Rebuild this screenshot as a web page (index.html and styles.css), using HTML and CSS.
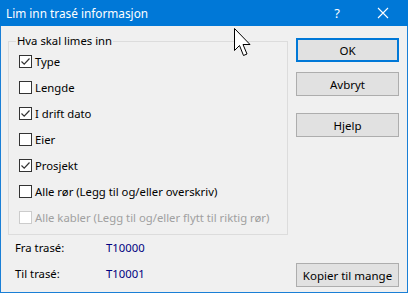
FILE: index.html
```html
<!DOCTYPE html>
<html>
<head>
<meta charset="utf-8">
<link rel="stylesheet" href="styles.css">
</head>
<body>
<div class="window">
  <div class="titlebar">
    <span class="title">Lim inn trasé informasjon</span>
    <span class="help">?</span>
    <span class="close">
      <svg width="12" height="12" viewBox="0 0 12 12"><path d="M1 1 L11 11 M11 1 L1 11" stroke="#fff" stroke-width="1.1" fill="none"/></svg>
    </span>
  </div>
  <div class="content">
    <div class="left">
      <fieldset class="group">
        <legend>Hva skal limes inn</legend>
        <div class="row first"><span class="cb checked"><svg width="11" height="11" viewBox="0 0 11 11"><path d="M1.5 5.5 L4.2 8.2 L9.5 2.5" stroke="#333" stroke-width="1.2" fill="none"/></svg></span><span>Type</span></div>
        <div class="row"><span class="cb"></span><span>Lengde</span></div>
        <div class="row"><span class="cb checked"><svg width="11" height="11" viewBox="0 0 11 11"><path d="M1.5 5.5 L4.2 8.2 L9.5 2.5" stroke="#333" stroke-width="1.2" fill="none"/></svg></span><span>I drift dato</span></div>
        <div class="row"><span class="cb"></span><span>Eier</span></div>
        <div class="row"><span class="cb checked"><svg width="11" height="11" viewBox="0 0 11 11"><path d="M1.5 5.5 L4.2 8.2 L9.5 2.5" stroke="#333" stroke-width="1.2" fill="none"/></svg></span><span>Prosjekt</span></div>
        <div class="row"><span class="cb"></span><span>Alle rør (Legg til og/eller overskriv)</span></div>
        <div class="row disabled"><span class="cb"></span><span>Alle kabler (Legg til og/eller flytt til riktig rør)</span></div>
      </fieldset>
      <div class="info"><span class="lbl">Fra trasé:</span><span class="val">T10000</span></div>
      <div class="info"><span class="lbl">Til trasé:</span><span class="val">T10001</span></div>
    </div>
    <div class="right">
      <button class="btn default">OK</button>
      <button class="btn cancel">Avbryt</button>
      <button class="btn helpbtn">Hjelp</button>
      <div class="spacer"></div>
      <button class="btn">Kopier til mange</button>
    </div>
  </div>
  <svg class="cursor" width="18" height="31" viewBox="0 0 18 31"><path d="M0.5 0.5 L0.5 22.5 L5.5 17.5 L9.5 27.5 L13 26 L9 16.5 L16 16.5 Z" fill="#fff" stroke="#000" stroke-width="1" stroke-linejoin="miter"/></svg>
</div>
</body>
</html>
```
FILE: styles.css
```css
* { box-sizing: border-box; }
html, body { margin: 0; padding: 0; }
body {
  width: 408px; height: 293px; overflow: hidden;
  font-family: "Noto Sans", "Open Sans", sans-serif;
  font-size: 11.3px;
  color: #000;
}
.window {
  position: relative;
  width: 408px; height: 293px;
  background: #f0f0f0;
  border: 1px solid #1a7fd6;
  border-top: none;
  display: flex; flex-direction: column;
}
.titlebar {
  height: 26px;
  margin: 0 -1px;
  background: #0078d7;
  color: #fff;
  display: flex; align-items: center;
  padding-left: 6px;
  font-size: 11.8px;
}
.title { flex: 1; }
.help { width: 46px; text-align: center; font-size: 13px; }
.close { width: 46px; display: flex; justify-content: center; align-items: center; margin-right: 2px; }
.content {
  flex: 1;
  display: flex;
  padding: 0 7px 5px 7px;
}
.left { width: 280px; display: flex; flex-direction: column; padding-top: 7px; }
.group {
  margin: 0;
  border: 1px solid #dcdcdc;
  padding: 0 0 4px 10px;
}
.group legend {
  padding: 0 1px;
  margin-left: -3px;
  line-height: 16px;
}
.row {
  height: 26px;
  display: flex; align-items: center;
}
.row.first { margin-top: -1px; }
.cb {
  width: 13px; height: 13px;
  border: 1px solid #333;
  background: #fff;
  margin-right: 3px;
  display: flex; align-items: center; justify-content: center;
  flex: none;
}
.disabled { color: #a0a0a0; }
.disabled .cb { border-color: #cccccc; }
.info {
  height: 26px;
  display: flex; align-items: center;
  padding-left: 7px;
}
.info:first-of-type { margin-top: -1px; }
.lbl { width: 91px; }
.val { color: #000080; }
.right {
  flex: 1;
  margin-left: 8px;
  display: flex; flex-direction: column;
  padding-top: 12px;
}
.btn {
  width: 103px; height: 24px;
  font-family: inherit; font-size: 11.5px;
  background: #e1e1e1;
  border: 1px solid #adadad;
  color: #000;
  padding: 0;
  margin: 0;
}
.default { border: 2px solid #0078d7; }
.cancel { margin-top: 10px; }
.helpbtn { margin-top: 17px; }
.spacer { flex: 1; }
.cursor { position: absolute; left: 233px; top: 28px; }
```
